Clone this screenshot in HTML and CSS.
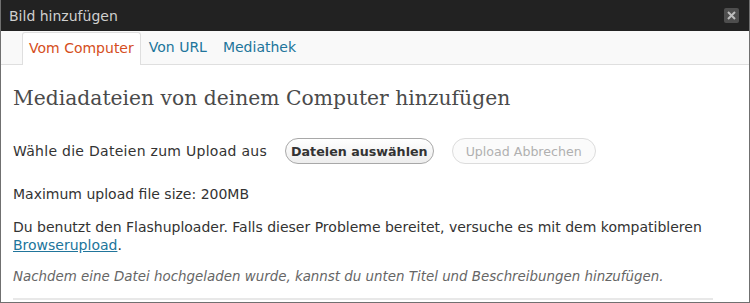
FILE: index.html
```html
<!DOCTYPE html>
<html lang="de">
<head>
<meta charset="utf-8">
<link rel="stylesheet" href="styles.css">
</head>
<body>
<div class="win">
  <div class="titlebar">
    <span class="title">Bild hinzufügen</span>
    <span class="close"><svg width="11" height="11" viewBox="0 0 11 11"><path d="M2 2 L9 9 M9 2 L2 9" stroke="#bdbdbd" stroke-width="2"/></svg></span>
  </div>
  <div class="tabs">
    <a class="tab active">Vom Computer</a>
    <a class="tab">Von URL</a>
    <a class="tab">Mediathek</a>
  </div>
  <div class="content">
    <h3 class="heading">Mediadateien von deinem Computer hinzufügen</h3>
    <div class="uprow">
      <span class="uplabel">Wähle die Dateien zum Upload aus</span>
      <button class="btn primary">Dateien auswählen</button>
      <button class="btn disabled">Upload Abbrechen</button>
    </div>
    <p class="p1">Maximum upload file size: 200MB</p>
    <p class="p2">Du benutzt den Flashuploader. Falls dieser Probleme bereitet, versuche es mit dem kompatibleren <a class="link">Browserupload</a>.</p>
    <p class="note">Nachdem eine Datei hochgeladen wurde, kannst du unten Titel und Beschreibungen hinzufügen.</p>
    <div class="rule"></div>
  </div>
</div>
</body>
</html>
```
FILE: styles.css
```css
* { box-sizing: border-box; }
html, body { margin: 0; padding: 0; }
body { width: 750px; height: 303px; overflow: hidden; background: #fff; font-family: "DejaVu Sans", Verdana, sans-serif; }
.win { width: 750px; height: 303px; border: 1px solid #707070; border-top: 0; display: flex; flex-direction: column; overflow: hidden; }
.titlebar { height: 31px; flex: none; background: #222; display: flex; align-items: center; justify-content: space-between; padding: 0 11px 0 9px; margin: 0 -1px; }
.title { color: #cfcfcf; font-size: 14px; }
.close { width: 15px; height: 15px; background: #4e4e4e; border-radius: 2px; display: flex; align-items: center; justify-content: center; }
.tabs { height: 34px; flex: none; background: #f9f9f9; border-bottom: 1px solid #dfdfdf; display: flex; align-items: flex-end; padding-left: 21px; }
.tab { font-size: 14px; color: #21759b; padding: 0 8px; height: 32px; line-height: 31px; }
.tab.active { color: #d54e21; background: #fff; border: 1px solid #dfdfdf; border-bottom: 0; border-radius: 3px 3px 0 0; padding: 0 6px; margin-bottom: -1px; height: 33px; }
.content { padding: 0 12px; color: #333; font-size: 14px; }
.heading { font-family: "DejaVu Serif", Georgia, serif; font-weight: normal; font-size: 20.3px; line-height: 23px; color: #4a4a4a; margin: 22px 0 0 0; }
.uprow { display: flex; align-items: center; margin-top: 28px; height: 26px; }
.uplabel { letter-spacing: 0.28px; }
.btn { font-family: "DejaVu Sans", sans-serif; font-size: 12.7px; border-radius: 13px; height: 26px; background: linear-gradient(#fff, #ededed); }
.primary { font-weight: bold; color: #333; border: 1px solid #a8a8a8; padding: 0 5px; margin-left: 18px; }
.disabled { color: #b0b0b0; border: 1px solid #dcdcdc; padding: 0 13px; margin-left: 18px; background: #fbfbfb; font-size: 12.6px; }
.p1 { margin: 22px 0 0 0; line-height: 16px; }
.p2 { margin: 16px 0 0 0; line-height: 18px; width: 720px; }
.link { color: #21759b; text-decoration: underline; }
.note { margin: 15px 0 0 0; line-height: 16px; font-size: 13.4px; font-style: italic; color: #666; }
.rule { height: 2px; background: #e8e8e8; margin-top: 13px; width: 700px; }
```
